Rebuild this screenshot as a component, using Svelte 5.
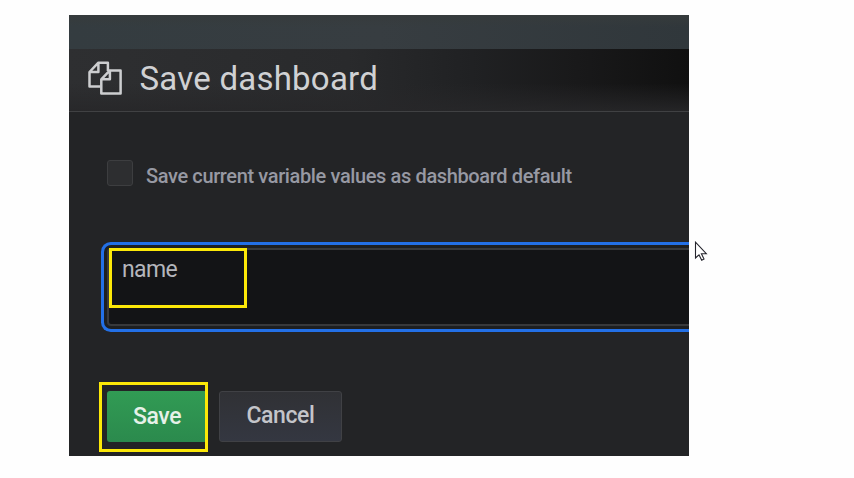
<script>
  let saveVariables = $state(false);
  let note = $state('name');
</script>

<main class="page">
  <section class="shot">
    <div class="backdrop"></div>
    <header class="header">
      <svg class="copy" width="36" height="36" viewBox="0 0 36 36" fill="none" stroke="#cdced0" stroke-width="2.5" stroke-linejoin="round">
        <path d="M13.5 26.6H2.5V12L11.4 2.7H20.9V11M2.5 12H11.4V2.7" />
        <path d="M22.9 10.4H33.6V33.5H14.3V19.3L22.9 10.4V19.3H14.3" />
      </svg>
      <h1><span>Save dashboard</span></h1>
    </header>
    <div class="body">
      <button class="option" role="checkbox" aria-checked={saveVariables} onclick={() => (saveVariables = !saveVariables)}>
        <span class="box"></span>
        <span class="label">Save current variable values as dashboard default</span>
      </button>
      <div class="field">
        <div class="input">
          <span class="value">{note}</span>
        </div>
        <div class="mark mark-name"></div>
      </div>
      <div class="actions">
        <button class="btn save">Save</button>
        <button class="btn cancel">Cancel</button>
        <div class="mark mark-save"></div>
      </div>
    </div>
  </section>
  <svg class="cursor" width="14" height="22" viewBox="0 0 14 22">
    <path d="M1.5 1.2V17L5 13.8L7.7 19.3L10 18.1L7.4 12.7H12.3Z" fill="#fff" stroke="#24242c" stroke-width="1.1" />
  </svg>
</main>

<style>
  :global(body) { margin: 0; background: #fefefe; }
  .page {
    position: relative;
    box-sizing: border-box;
    width: 854px;
    height: 478px;
    padding: 15px 0 0 69px;
    overflow: hidden;
    font-family: Roboto, "Liberation Sans", sans-serif;
  }
  .shot {
    width: 620px;
    height: 441px;
    overflow: hidden;
    background: #232426;
  }
  .backdrop {
    height: 34px;
    background: linear-gradient(#363b3c, transparent 35%), linear-gradient(90deg, #343c40, #373d41 50%, #30373b);
  }
  .header {
    box-sizing: border-box;
    height: 63px;
    padding-left: 18px;
    display: flex;
    align-items: flex-start;
    border-bottom: 1px solid #404143;
    background: linear-gradient(transparent 55%, rgba(39, 39, 41, .9)), linear-gradient(90deg, #2e2f31, #292a2c 45%, #202123 65%, #19191a 82%, #101010);
  }
  .copy { margin-top: 11px; flex: none; }
  h1 {
    margin: 10px 0 0 16.5px;
    font-size: 33px;
    line-height: 40px;
    font-weight: 400;
    letter-spacing: .23px;
    white-space: nowrap;
    color: #d0d1d3;
  }
  .body { padding: 48px 0 0 38px; }
  button { font-family: inherit; margin: 0; }
  .option {
    display: flex;
    align-items: flex-start;
    padding: 0;
    border: 0;
    background: none;
    height: 27px;
  }
  .box {
    box-sizing: border-box;
    width: 26px;
    height: 26px;
    border: 1.5px solid #3d3e40;
    border-radius: 3px;
    background: #2d2e30;
  }
  .label {
    margin: 4px 0 0 13px;
    font-size: 20px;
    line-height: 24px;
    font-weight: 500;
    letter-spacing: -.375px;
    white-space: nowrap;
    color: #9799a3;
  }
  .field { position: relative; margin: 61px 0 0; }
  .input {
    box-sizing: border-box;
    width: 620px;
    height: 78px;
    padding: 7px 13px;
    border: 2px solid #38393b;
    border-radius: 4px;
    background: #131416;
    box-shadow: 0 0 0 3px #1d1f21, 0 0 0 6px #2370e6;
  }
  .value {
    display: block;
    font-size: 23px;
    line-height: 26px;
    letter-spacing: -.6px;
    color: #b4b6bc;
  }
  .mark {
    position: absolute;
    box-sizing: border-box;
    border: 3px solid #fce808;
    pointer-events: none;
  }
  .mark-name { left: 2px; top: 0; width: 138px; height: 60px; }
  .mark-save { left: -8px; top: -9px; width: 109px; height: 70px; }
  .actions {
    position: relative;
    display: flex;
    gap: 12px;
    margin-top: 65px;
  }
  .btn {
    box-sizing: border-box;
    height: 51px;
    padding: 0;
    border: 0;
    border-radius: 3px;
    font-size: 23px;
    font-weight: 500;
    line-height: 28px;
    letter-spacing: -.4px;
  }
  .save {
    width: 100px;
    background: linear-gradient(#319b54, #2b8a4d);
    color: #e6f1e8;
  }
  .cancel {
    width: 123px;
    border: 1.5px solid #404145;
    padding-bottom: 2px;
    background: linear-gradient(#303135, #343741);
    color: #c4c5c9;
  }
  .cursor { position: absolute; left: 694px; top: 241px; }
</style>
